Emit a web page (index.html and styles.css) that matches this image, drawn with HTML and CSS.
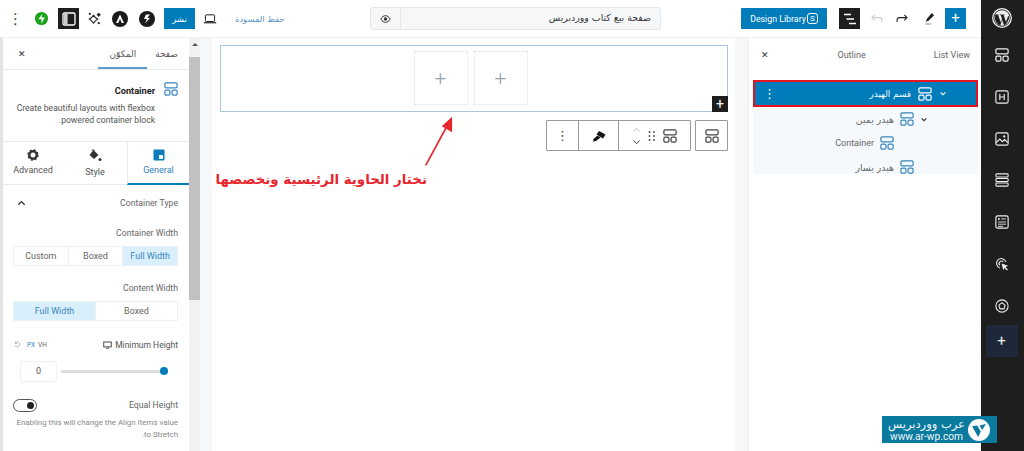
FILE: index.html
```html
<!DOCTYPE html>
<html lang="ar">
<head>
    <meta charset="UTF-8" />
    <title>صفحة بيع كتاب ووردبريس</title>
    <link rel="stylesheet" href="styles.css">
</head>
<body>
    <svg class="defs" width="0" height="0">
        <symbol id="box" viewBox="0 0 16 16">
            <rect x="1" y="1" width="14" height="5.6" rx="1.6" fill="none" stroke="currentColor" stroke-width="1.4"/>
            <rect x="1" y="9.2" width="5.8" height="5.8" rx="1.6" fill="none" stroke="currentColor" stroke-width="1.4"/>
            <rect x="9.2" y="9.2" width="5.8" height="5.8" rx="1.6" fill="none" stroke="currentColor" stroke-width="1.4"/>
        </symbol>
    </svg>

    <div class="app">
        <div class="main">
            <header class="topbar">
                <div class="dots-v">⋮</div>
                <svg class="ic-green" viewBox="0 0 16 16"><circle cx="8" cy="8" r="7" fill="#1aa31a"/><path d="M9 2.8 4.6 8.8H8V13.2L11.6 7H8Z" fill="#fff"/></svg>
                <div class="dark-btn panel-btn"><svg viewBox="0 0 14 14" width="14" height="14"><rect x="1" y="1" width="12" height="12" rx="1.5" fill="none" stroke="#fff" stroke-width="1.3"/><rect x="2" y="2" width="3.6" height="10" fill="#ccc"/></svg></div>
                <svg class="ic-spark" viewBox="0 0 16 16"><path d="M7 4.5 9 7l2.5 1.5L9 10.5 7 13 5 10.5 2.5 8.5 5 7Z" fill="none" stroke="#222" stroke-width="1.2"/><path d="M12.5 1.5 13.5 3 15 4 13.5 5 12.5 6.5 11.5 5 10 4 11.5 3Z" fill="#222"/><circle cx="3" cy="3" r="1.2" fill="#222"/><circle cx="12.5" cy="13" r="1.2" fill="#222"/></svg>
                <svg class="ic-round" viewBox="0 0 16 16"><circle cx="8" cy="8" r="8" fill="#1a1a1a"/><path d="M8 3.5 4 12H6.2L8 8 9.8 12H12Z" fill="#fff"/></svg>
                <svg class="ic-round second" viewBox="0 0 16 16"><circle cx="8" cy="8" r="8" fill="#1a1a1a"/><path d="M11 3.5H7L5 8H8L6 12.5 11 7H8.3Z" fill="#fff"/></svg>
                <button class="publish">نشر</button>
                <svg class="ic-laptop" viewBox="0 0 16 12"><rect x="2.5" y="1" width="11" height="8" rx="1" fill="none" stroke="#222" stroke-width="1.2"/><path d="M.5 10.5H15.5" stroke="#222" stroke-width="1.4"/></svg>
                <a class="save-draft">حفظ المسودة</a>
                <div class="title-box">
                    <div class="title-eye"><svg viewBox="0 0 16 12" width="11" height="8"><path d="M1 6C3 2.5 5.5 1 8 1s5 1.5 7 5c-2 3.5-4.5 5-7 5S3 9.5 1 6Z" fill="none" stroke="#333" stroke-width="1.5"/><circle cx="8" cy="6" r="2.5" fill="#333"/></svg></div>
                    <div class="title-text">صفحة بيع كتاب ووردبريس</div>
                </div>
                <button class="library">Design Library<span class="s-badge">S</span></button>
                <div class="dark-btn list-btn"><svg viewBox="0 0 14 12" width="14" height="12"><path d="M1 1.5H8M3.5 6H11M6 10.5H13" stroke="#fff" stroke-width="1.3"/></svg></div>
                <svg class="ic-undo" viewBox="0 0 14 10"><path d="M13 9V6.5C13 5 12 4 10.5 4H2M5 1 2 4 5 7" fill="none" stroke="#c8ccd0" stroke-width="1.2"/></svg>
                <svg class="ic-redo" viewBox="0 0 14 10"><path d="M1 9V6.5C1 5 2 4 3.5 4H12M9 1 12 4 9 7" fill="none" stroke="#222" stroke-width="1.2"/></svg>
                <svg class="ic-pen" viewBox="0 0 12 14"><path d="M8.5 1 11 3.5 5 9.5 2 10.5 3 7.5Z" fill="#222"/><path d="M1.5 13H8" stroke="#999" stroke-width="1.2"/></svg>
                <button class="add-btn">+</button>
            </header>

            <div class="workspace">
                <aside class="left-panel" dir="rtl">
                    <div class="panel-tabs">
                        <span class="ptab">صفحة</span>
                        <span class="ptab active">المكوّن</span>
                        <span class="ptab-close">✕</span>
                    </div>
                    <div class="block-info">
                        <svg class="info-icon"><use href="#box"/></svg>
                        <div>
                            <div class="info-name">Container</div>
                            <p class="info-desc">Create beautiful layouts with flexbox powered container block.</p>
                        </div>
                    </div>
                    <div class="set-tabs">
                        <div class="stab active">
                            <svg viewBox="0 0 12 12" width="12" height="12"><rect x=".5" y=".5" width="11" height="11" rx="1" fill="#0a7cba"/><rect x="6" y="6" width="4" height="4" fill="#fff"/></svg>
                            General
                        </div>
                        <div class="stab style-tab">
                            <svg viewBox="0 0 14 13" width="14" height="13"><path d="M5.5 1 10.5 6 6 10 1.5 6Z" fill="#333"/><path d="M4 1.5C4 .5 6 .5 6.5 2" fill="none" stroke="#333"/><circle cx="12" cy="10.5" r="1.5" fill="#333"/></svg>
                            Style
                        </div>
                        <div class="stab">
                            <svg viewBox="0 0 12 12" width="12" height="12"><circle cx="6" cy="6" r="3.7" fill="none" stroke="#333" stroke-width="2.4"/><circle cx="6" cy="6" r="5" fill="none" stroke="#333" stroke-width="1.4" stroke-dasharray="2 1.93"/></svg>
                            Advanced
                        </div>
                    </div>
                    <div class="row-head">
                        <span class="label">Container Type</span>
                        <svg viewBox="0 0 10 6" width="9" height="6"><path d="M1.5 5 5 1.5 8.5 5" fill="none" stroke="#333" stroke-width="1.4"/></svg>
                    </div>
                    <div class="label ctl-label">Container Width</div>
                    <div class="seg">
                        <span class="on">Full Width</span><span>Boxed</span><span>Custom</span>
                    </div>
                    <div class="label ctl-label second">Content Width</div>
                    <div class="seg">
                        <span>Boxed</span><span class="on">Full Width</span>
                    </div>
                    <div class="height-head">
                        <span class="label dark">
                            Minimum Height
                            <svg viewBox="0 0 12 10" width="9" height="8"><rect x="1" y="1" width="10" height="6.5" fill="none" stroke="#444" stroke-width="1.3"/><path d="M4 9.3H8" stroke="#444" stroke-width="1.3"/></svg>
                        </span>
                        <span class="units">
                            <span class="unit">VH</span><span class="unit blue">PX</span>
                            <svg viewBox="0 0 10 10" width="7" height="7"><path d="M2 3a3.5 3.5 0 1 1-.5 3M2 1v2.5h2.5" fill="none" stroke="#999" stroke-width="1"/></svg>
                        </span>
                    </div>
                    <div class="slider-row">
                        <div class="track"><i class="knob"></i></div>
                        <div class="num">0</div>
                    </div>
                    <div class="toggle-row">
                        <span class="label">Equal Height</span>
                        <span class="toggle"><i></i></span>
                    </div>
                    <p class="note">Enabling this will change the Align Items value to Stretch.</p>
                </aside>

                <div class="scroll"><span class="scroll-arrow"></span><div class="thumb"></div></div>

                <main class="canvas">
                    <div class="page">
                        <div class="block">
                            <div class="slot">+</div>
                            <div class="slot">+</div>
                            <div class="corner">+</div>
                        </div>
                        <div class="toolbar">
                            <div class="tgroup">
                                <div class="tcell t-dots">⋮</div>
                                <div class="tcell t-brush"><svg viewBox="0 0 14 12" width="14" height="12"><path d="M7 1 13.500 4.500 11 8.500 4.500 4.500Z" fill="#111"/><path d="M5.500 5.500 8.500 7.500 4 11 1 11.500 1.500 9Z" fill="#111"/></svg></div>
                                <div class="tcell t-move">
                                    <svg viewBox="0 0 10 20" width="9" height="18"><path d="M1.5 5 5 1.5 8.5 5" fill="none" stroke="#bbb" stroke-width="1.1"/><path d="M1.5 15 5 18.5 8.5 15" fill="none" stroke="#333" stroke-width="1.1"/></svg>
                                    <svg viewBox="0 0 8 12" width="8" height="12"><g fill="#444"><circle cx="1.5" cy="2" r=".9"/><circle cx="6" cy="2" r=".9"/><circle cx="1.5" cy="6" r=".9"/><circle cx="6" cy="6" r=".9"/><circle cx="1.5" cy="10" r=".9"/><circle cx="6" cy="10" r=".9"/></g></svg>
                                    <svg class="tool-box"><use href="#box"/></svg>
                                </div>
                            </div>
                            <div class="tsingle"><svg class="tool-box"><use href="#box"/></svg></div>
                        </div>
                    </div>
                </main>

                <aside class="right-panel" dir="rtl">
                    <div class="out-tabs">
                        <span>List View</span>
                        <span>Outline</span>
                        <span class="close">✕</span>
                    </div>
                    <div class="tree">
                        <div class="node selected">
                            <svg class="chev" viewBox="0 0 10 6"><path d="M2 1.5 5 4.5 8 1.5" fill="none" stroke="#fff" stroke-width="1.3"/></svg>
                            <svg class="node-ic"><use href="#box"/></svg>
                            <span>قسم الهيدر</span>
                            <span class="node-menu">⋮</span>
                        </div>
                        <div class="node lvl1">
                            <svg class="chev" viewBox="0 0 10 6"><path d="M2 1.5 5 4.5 8 1.5" fill="none" stroke="#333" stroke-width="1.3"/></svg>
                            <svg class="node-ic"><use href="#box"/></svg>
                            <span>هيدر يمين</span>
                        </div>
                        <div class="node lvl2">
                            <svg class="node-ic"><use href="#box"/></svg>
                            <span>Container</span>
                        </div>
                        <div class="node lvl1 last">
                            <svg class="node-ic"><use href="#box"/></svg>
                            <span>هيدر يسار</span>
                        </div>
                    </div>
                </aside>
            </div>
        </div>

        <nav class="sidebar">
            <svg class="wp" viewBox="0 0 20 20"><circle cx="10" cy="10" r="9.3" fill="none" stroke="#eee" stroke-width="1.3"/><circle cx="10" cy="10" r="7.8" fill="#eee"/><path d="M3.2 6.5H7.5L6.3 7.2 8.8 14.5 10 11 8.8 7.2H8V6.5H13L11.8 7.2 14 14 16.2 7.8 17.2 9C17 12 15 16 12 17.3L10.2 12 8.3 17.5C5.5 16.5 3.5 14 2.8 10.5Z" fill="#1e1e1e"/></svg>
            <svg class="side-ic"><use href="#box"/></svg>
            <svg class="side-ic" viewBox="0 0 16 16"><rect x="1" y="1" width="14" height="14" rx="2" fill="none" stroke="#eee" stroke-width="1.3"/><path d="M5.5 4.5V11.5M10.5 4.5V11.5M5.5 8H10.5" stroke="#eee" stroke-width="1.3"/></svg>
            <svg class="side-ic" viewBox="0 0 16 16"><rect x="1" y="1" width="14" height="14" rx="2" fill="none" stroke="#eee" stroke-width="1.3"/><path d="M1.5 12 5.5 8 8.5 11 11 8.5 14.5 12" fill="none" stroke="#eee" stroke-width="1.3"/><circle cx="10.5" cy="5" r="1.3" fill="#eee"/></svg>
            <svg class="side-ic" viewBox="0 0 16 16"><rect x="1" y="1" width="14" height="3.5" rx="1" fill="none" stroke="#eee" stroke-width="1.2"/><rect x="1" y="6.2" width="14" height="3.6" rx="1" fill="none" stroke="#eee" stroke-width="1.2"/><rect x="1" y="11.5" width="14" height="3.5" rx="1" fill="none" stroke="#eee" stroke-width="1.2"/></svg>
            <svg class="side-ic" viewBox="0 0 16 16"><rect x="1" y="1" width="14" height="14" rx="2" fill="none" stroke="#eee" stroke-width="1.3"/><circle cx="4.5" cy="4.5" r="1.1" fill="#eee"/><path d="M7 4.5H12.5M3.5 8H12.5M3.5 10.5H12.5M3.5 13H9" stroke="#eee" stroke-width="1"/></svg>
            <svg class="side-ic" viewBox="0 0 16 16"><path d="M12.5 5.5A5.5 5.5 0 1 0 5.5 12.5" fill="none" stroke="#eee" stroke-width="1.2"/><path d="M9.5 5.5A2.5 2.5 0 1 0 5.5 9.5" fill="none" stroke="#eee" stroke-width="1.2"/><path d="M7.5 7.5 15 10 12 11.5 14.8 14.5 13.5 15.5 10.8 12.5 9.5 15Z" fill="#eee"/></svg>
            <svg class="side-ic" viewBox="0 0 16 16"><circle cx="8" cy="8" r="7" fill="none" stroke="#eee" stroke-width="1.2"/><path d="M8 4.2 11.5 7 10.3 11.3H5.7L4.5 7Z" fill="none" stroke="#eee" stroke-width="1.2"/></svg>
            <div class="side-add">+</div>
        </nav>
    </div>

    <!-- annotation on top of the screenshot -->
    <svg class="arrow" viewBox="0 0 40 60"><path d="M2 58 27 12" stroke="#e8262e" stroke-width="2" fill="none"/><path d="M33 1 33 19 21 12Z" fill="#e8262e"/></svg>
    <div class="callout">نختار الحاوية الرئيسية ونخصصها</div>

    <div class="badge">
        <div class="badge-text">
            <div class="badge-ar">عرب ووردبريس</div>
            <div class="badge-url">www.ar-wp.com</div>
        </div>
        <svg class="badge-logo" viewBox="0 0 24 24"><circle cx="12" cy="12" r="12" fill="#fff"/><path d="M4.5 8 11 19.5 14 13.5 10 7ZM12.5 7 15.5 12 19.500 5.500Z" fill="#0a7a9e"/></svg>
    </div>
</body>
</html>
```

FILE: styles.css
```css
* {
    box-sizing: border-box;
}
html, body {
    height: 100%;
}
body {
    margin: 0;
    overflow: hidden;
    position: relative;
    background: #fff;
    color: #555;
    font-family: Roboto, "DejaVu Sans", sans-serif;
    font-size: 9px;
}
.defs {
    position: absolute;
}
p {
    margin: 0;
}
button {
    border: 0;
    padding: 0;
    font-family: inherit;
}
.app {
    display: flex;
    height: 100%;
}
.main {
    flex: 1;
    min-width: 0;
    display: flex;
    flex-direction: column;
}

/* top bar */
.topbar {
    height: 38px;
    flex: none;
    display: flex;
    align-items: center;
    border-bottom: 1px solid #eef0f2;
    padding-left: 8px;
}
.topbar > * {
    flex: none;
}
.dots-v {
    width: 8px;
    color: #444;
    font-size: 15px;
    text-align: center;
}
.ic-green {
    width: 15px;
    height: 15px;
    margin-left: 18px;
}
.dark-btn {
    width: 21px;
    height: 21px;
    background: #1e1e1e;
    display: flex;
    align-items: center;
    justify-content: center;
}
.panel-btn {
    margin-left: 9px;
}
.ic-spark {
    width: 15px;
    height: 15px;
    margin-left: 8px;
}
.ic-round {
    width: 16px;
    height: 16px;
    margin-left: 10px;
}
.ic-round.second {
    margin-left: 11px;
}
.publish {
    width: 31px;
    height: 21px;
    margin-left: 9px;
    background: #007cba;
    color: #fff;
    font-family: "DejaVu Sans", sans-serif;
    font-size: 8.5px;
}
.ic-laptop {
    width: 14px;
    height: 10px;
    margin-left: 8px;
}
.save-draft {
    width: 50px;
    margin-left: 18px;
    color: #5a94c4;
    font-family: "DejaVu Sans", sans-serif;
    font-size: 8.4px;
    white-space: nowrap;
}
.title-box {
    width: 291px;
    height: 23px;
    margin-left: 85px;
    display: flex;
    background: #f6f7f9;
    border: 1px solid #e4e7ea;
    border-radius: 3px;
}
.title-eye {
    width: 30px;
    display: flex;
    align-items: center;
    justify-content: center;
    border-right: 1px solid #e4e7ea;
}
.title-text {
    flex: 1;
    direction: rtl;
    padding-right: 9px;
    line-height: 20px;
    color: #333;
    font-family: "DejaVu Sans", sans-serif;
    font-size: 9.4px;
}
.library {
    width: 86px;
    height: 21px;
    margin-left: 80px;
    background: #007cba;
    color: #fff;
    font-size: 8.8px;
    border-radius: 1px;
    display: flex;
    align-items: center;
    justify-content: center;
}
.s-badge {
    flex: none;
    width: 11px;
    height: 11px;
    margin-left: 1px;
    border: 1px solid #fff;
    border-radius: 3px;
    font-size: 8px;
    line-height: 9px;
    text-align: center;
}
.list-btn {
    margin-left: 12px;
}
.ic-undo {
    width: 13px;
    height: 9px;
    margin-left: 10px;
}
.ic-redo {
    width: 13px;
    height: 9px;
    margin-left: 13px;
}
.ic-pen {
    width: 11px;
    height: 13px;
    margin-left: 15px;
}
.add-btn {
    width: 21px;
    height: 21px;
    margin-left: 10px;
    background: #007cba;
    color: #fff;
    font-size: 15px;
    line-height: 21px;
}

.workspace {
    flex: 1;
    min-height: 0;
    display: flex;
}

/* left settings panel */
.left-panel {
    width: 189px;
    flex: none;
    border-left: 3px solid #e3e3e3;
    overflow: hidden;
}
.panel-tabs {
    height: 32px;
    display: flex;
    align-items: center;
    padding: 0 11px 0 15px;
    border-bottom: 1px solid #e8eaed;
    font-family: "DejaVu Sans", sans-serif;
    font-size: 9px;
    position: relative;
}
.ptab.active {
    margin-right: 19px;
    position: relative;
}
.ptab.active::after {
    content: "";
    position: absolute;
    left: -11px;
    right: -11px;
    bottom: -10px;
    height: 2px;
    background: #5a9ccb;
}
.ptab-close {
    margin-right: auto;
    color: #333;
    font-size: 9px;
}
.block-info {
    height: 72px;
    display: flex;
    gap: 9px;
    padding: 12px 11px 0 8px;
    border-bottom: 1px solid #e8eaed;
}
.info-icon {
    width: 14px;
    height: 14px;
    flex: none;
    color: #3a87c0;
}
.info-name {
    color: #222;
    font-weight: 700;
    font-size: 9.2px;
    margin: 3px 0 6px;
}
.info-desc {
    line-height: 12px;
    font-size: 8.6px;
    color: #555;
}
.set-tabs {
    height: 43px;
    display: grid;
    grid-template-columns: 62px 64px 60px;
    border-bottom: 1px solid #e8eaed;
}
.stab {
    display: flex;
    flex-direction: column;
    align-items: center;
    gap: 4px;
    padding-top: 7px;
    font-size: 9px;
    color: #555;
}
.style-tab {
    gap: 5px;
}
.stab.active {
    color: #2d7fb8;
    border-bottom: 2px solid #007cba;
    border-left: 1px solid #e8eaed;
    height: 43px;
}
.row-head {
    display: flex;
    justify-content: space-between;
    align-items: center;
    padding: 10px 11px 0 14px;
    height: 26px;
}
.label {
    color: #666;
    font-size: 8.7px;
}
.label.dark {
    color: #555;
    display: flex;
    gap: 3px;
    align-items: center;
    font-size: 8.5px;
}
.ctl-label {
    margin: 17px 11px 7px 0;
    line-height: 11px;
}
.ctl-label.second {
    margin-top: 17px;
    margin-bottom: 7px;
}
.seg {
    display: flex;
    height: 20px;
    margin: 0 11px 0 10px;
    border: 1px solid #eef0f2;
}
.seg span {
    flex: 1;
    text-align: center;
    line-height: 18px;
    color: #666;
}
.seg span + span {
    border-right: 1px solid #eef0f2;
}
.seg .on {
    background: #d9effc;
    color: #3a86bd;
}
.height-head {
    display: flex;
    justify-content: space-between;
    align-items: center;
    padding: 17px 11px 0 11px;
    height: 30px;
}
.units {
    display: flex;
    gap: 3px;
    align-items: center;
}
.unit {
    font-size: 6.5px;
    color: #666;
}
.unit.blue {
    color: #3a86bd;
}
.units svg {
    margin-right: 3px;
}
.slider-row {
    display: flex;
    align-items: center;
    gap: 4px;
    margin-top: 10px;
    padding-right: 21px;
}
.num {
    width: 37px;
    height: 21px;
    border: 1px solid #eef0f2;
    border-radius: 2px;
    text-align: center;
    line-height: 19px;
    font-size: 9px;
}
.track {
    width: 107px;
    height: 3px;
    background: #ddd;
    position: relative;
}
.knob {
    position: absolute;
    right: 0;
    top: -3px;
    width: 8px;
    height: 8px;
    border-radius: 50%;
    background: #007cba;
}
.toggle-row {
    display: flex;
    justify-content: space-between;
    align-items: center;
    padding: 0 11px 0 10px;
    margin-top: 16px;
    height: 14px;
}
.toggle {
    width: 24px;
    height: 13px;
    border: 1px solid #555;
    border-radius: 7px;
    position: relative;
}
.toggle i {
    position: absolute;
    right: 2px;
    top: 2px;
    width: 7px;
    height: 7px;
    border-radius: 50%;
    background: #222;
}
.note {
    margin: 5px 11px 0 8px;
    line-height: 12px;
    font-size: 7.9px;
    color: #888;
}

.scroll {
    width: 11px;
    flex: none;
    background: #f1f1f1;
}
.scroll-arrow {
    display: block;
    width: 0;
    margin: 5px auto 0;
    border: 3px solid transparent;
    border-top: 0;
    border-bottom: 3px solid #555;
}
.thumb {
    margin-top: 11px;
    height: 243px;
    background: #c1c1c1;
}

/* canvas */
.canvas {
    flex: 1;
    min-width: 0;
    background: #f6f7f9;
    padding: 0 13px 0 12px;
}
.page {
    height: 100%;
    background: #fff;
    padding: 7px 7px 0 8px;
}
.block {
    height: 67px;
    border: 1px solid #a8c6e2;
    display: flex;
    justify-content: center;
    gap: 6px;
    padding: 5px 7px 0 0;
    position: relative;
}
.slot {
    width: 54px;
    height: 54px;
    border: 1px dotted #dfe2e5;
    color: #98a1a9;
    font-size: 21px;
    font-weight: 300;
    line-height: 52px;
    text-align: center;
}
.corner {
    position: absolute;
    right: -1px;
    bottom: -1px;
    width: 16px;
    height: 16px;
    background: #1e1e1e;
    color: #fff;
    font-size: 14px;
    line-height: 16px;
    text-align: center;
}
.toolbar {
    display: flex;
    justify-content: flex-end;
    gap: 4px;
    margin-top: 8px;
}
.tgroup, .tsingle {
    height: 31px;
    display: flex;
    border: 1px solid #999;
    border-radius: 1px;
}
.tcell {
    display: flex;
    align-items: center;
    justify-content: center;
    border-right: 1px solid #999;
}
.tcell:last-child {
    border-right: 0;
}
.t-dots {
    width: 32px;
    color: #444;
    font-size: 13px;
}
.t-brush {
    width: 40px;
}
.t-move {
    width: 71px;
    gap: 7px;
}
.tsingle {
    width: 33px;
    align-items: center;
    justify-content: center;
}
.tool-box {
    width: 14px;
    height: 14px;
    color: #444;
}

/* right outline panel */
.right-panel {
    width: 233px;
    flex: none;
    border-left: 1px solid #eef0f2;
}
.out-tabs {
    height: 34px;
    display: flex;
    align-items: center;
    gap: 68px;
    padding: 0 11px 0 12px;
    color: #666;
    font-size: 9px;
    white-space: nowrap;
}
.out-tabs .close {
    margin-right: auto;
    color: #333;
}
.tree {
    margin: 8px 3px 0 4px;
}
.node {
    display: flex;
    align-items: center;
    gap: 7px;
    height: 24px;
    background: #f5f9fc;
    color: #666;
    font-family: "DejaVu Sans", sans-serif;
    font-size: 9.4px;
}
.node.selected {
    height: 27px;
    background: #007cba;
    color: #fff;
    border: 2px solid #e6141e;
    padding-right: 29px;
    font-size: 8.8px;
}
.node.lvl1 {
    padding-right: 50px;
    gap: 6px;
}
.node.lvl2 {
    padding-right: 84px;
    gap: 6px;
    font-family: Roboto, sans-serif;
    font-size: 9px;
}
.node.last {
    padding: 5px 64px 0 0;
    height: 19px;
}
.chev {
    width: 8px;
    height: 5px;
    flex: none;
}
.node-ic {
    width: 14px;
    height: 14px;
    flex: none;
    color: #3a87c0;
}
.selected .node-ic {
    color: #fff;
}
.node-menu {
    margin-right: auto;
    margin-left: 8px;
    font-size: 13px;
}

/* dark icon rail */
.sidebar {
    width: 43px;
    flex: none;
    background: #1e1e1e;
    display: flex;
    flex-direction: column;
    align-items: center;
    padding: 8px 2px 0 0;
}
.wp {
    width: 20px;
    height: 20px;
}
.side-ic {
    width: 14px;
    height: 14px;
    margin-top: 27.8px;
    color: #eee;
}
.wp + .side-ic {
    margin-top: 20px;
}
.side-add {
    width: 32px;
    height: 32px;
    margin-top: 12px;
    background: #1d2838;
    color: #eee;
    font-size: 15px;
    line-height: 32px;
    text-align: center;
}

/* overlays */
.arrow {
    position: absolute;
    left: 424px;
    top: 116px;
    width: 34px;
    height: 51px;
}
.callout {
    position: absolute;
    left: 216px;
    top: 170px;
    width: 211px;
    direction: rtl;
    white-space: nowrap;
    color: #e8262e;
    font-family: "DejaVu Sans", sans-serif;
    font-weight: 700;
    font-size: 13.4px;
    line-height: 20px;
}
.badge {
    position: absolute;
    left: 882px;
    top: 416px;
    width: 115px;
    height: 27px;
    background: #0a7a9e;
    display: flex;
    align-items: center;
    gap: 3px;
    padding: 0 7px 0 6px;
    color: #f0f6f8;
}
.badge-text {
    flex: 1;
    text-align: center;
    white-space: nowrap;
}
.badge-ar {
    font-family: "DejaVu Sans", sans-serif;
    font-size: 11.5px;
    line-height: 13px;
}
.badge-url {
    font-size: 10.2px;
    line-height: 11px;
}
.badge-logo {
    width: 22px;
    height: 22px;
    flex: none;
}
```
